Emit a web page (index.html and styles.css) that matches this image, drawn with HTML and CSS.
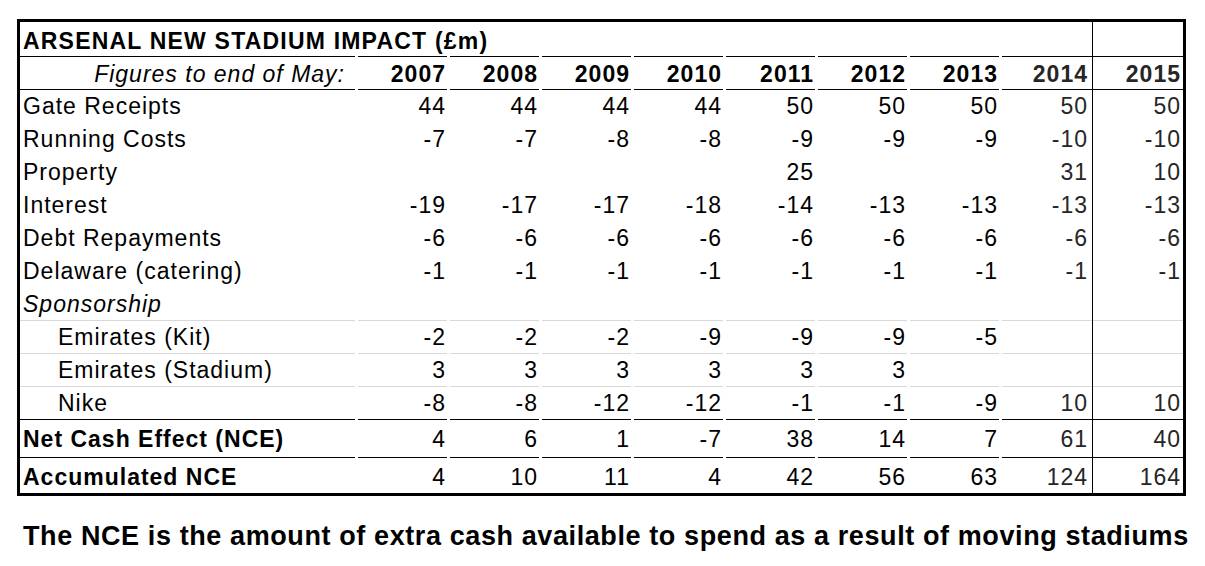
FILE: index.html
```html
<!DOCTYPE html>
<html>
<head>
<meta charset="utf-8">
<link rel="stylesheet" href="styles.css">
</head>
<body>
<table class="sheet">
  <colgroup>
    <col class="w-label"><col class="w-yr"><col class="w-yr"><col class="w-yr"><col class="w-yr"><col class="w-yr"><col class="w-yr"><col class="w-yr"><col class="w-14"><col class="w-15">
  </colgroup>
  <tr class="r-title ln-k">
    <td class="title">ARSENAL NEW STADIUM IMPACT (£m)</td><td></td><td></td><td></td><td></td><td></td><td></td><td></td><td class="c14"></td><td class="c15"></td>
  </tr>
  <tr class="r-head ln-k">
    <td class="fig">Figures to end of May:</td><td class="n b">2007</td><td class="n b">2008</td><td class="n b">2009</td><td class="n b">2010</td><td class="n b">2011</td><td class="n b">2012</td><td class="n b">2013</td><td class="n b c14">2014</td><td class="n b c15">2015</td>
  </tr>
  <tr class="r">
    <td class="lab">Gate Receipts</td><td class="n">44</td><td class="n">44</td><td class="n">44</td><td class="n">44</td><td class="n">50</td><td class="n">50</td><td class="n">50</td><td class="n c14">50</td><td class="n c15">50</td>
  </tr>
  <tr class="r">
    <td class="lab">Running Costs</td><td class="n">-7</td><td class="n">-7</td><td class="n">-8</td><td class="n">-8</td><td class="n">-9</td><td class="n">-9</td><td class="n">-9</td><td class="n c14">-10</td><td class="n c15">-10</td>
  </tr>
  <tr class="r">
    <td class="lab">Property</td><td class="n"></td><td class="n"></td><td class="n"></td><td class="n"></td><td class="n">25</td><td class="n"></td><td class="n"></td><td class="n c14">31</td><td class="n c15">10</td>
  </tr>
  <tr class="r">
    <td class="lab">Interest</td><td class="n">-19</td><td class="n">-17</td><td class="n">-17</td><td class="n">-18</td><td class="n">-14</td><td class="n">-13</td><td class="n">-13</td><td class="n c14">-13</td><td class="n c15">-13</td>
  </tr>
  <tr class="r">
    <td class="lab">Debt Repayments</td><td class="n">-6</td><td class="n">-6</td><td class="n">-6</td><td class="n">-6</td><td class="n">-6</td><td class="n">-6</td><td class="n">-6</td><td class="n c14">-6</td><td class="n c15">-6</td>
  </tr>
  <tr class="r">
    <td class="lab">Delaware (catering)</td><td class="n">-1</td><td class="n">-1</td><td class="n">-1</td><td class="n">-1</td><td class="n">-1</td><td class="n">-1</td><td class="n">-1</td><td class="n c14">-1</td><td class="n c15">-1</td>
  </tr>
  <tr class="r ln-g">
    <td class="lab it">Sponsorship</td><td class="n"></td><td class="n"></td><td class="n"></td><td class="n"></td><td class="n"></td><td class="n"></td><td class="n"></td><td class="n c14"></td><td class="n c15"></td>
  </tr>
  <tr class="r ln-g">
    <td class="lab ind">Emirates (Kit)</td><td class="n">-2</td><td class="n">-2</td><td class="n">-2</td><td class="n">-9</td><td class="n">-9</td><td class="n">-9</td><td class="n">-5</td><td class="n c14"></td><td class="n c15"></td>
  </tr>
  <tr class="r ln-g">
    <td class="lab ind">Emirates (Stadium)</td><td class="n">3</td><td class="n">3</td><td class="n">3</td><td class="n">3</td><td class="n">3</td><td class="n">3</td><td class="n"></td><td class="n c14"></td><td class="n c15"></td>
  </tr>
  <tr class="r ln-k">
    <td class="lab ind">Nike</td><td class="n">-8</td><td class="n">-8</td><td class="n">-12</td><td class="n">-12</td><td class="n">-1</td><td class="n">-1</td><td class="n">-9</td><td class="n c14">10</td><td class="n c15">10</td>
  </tr>
  <tr class="r-nce ln-k">
    <td class="lab b">Net Cash Effect (NCE)</td><td class="n">4</td><td class="n">6</td><td class="n">1</td><td class="n">-7</td><td class="n">38</td><td class="n">14</td><td class="n">7</td><td class="n c14">61</td><td class="n c15">40</td>
  </tr>
  <tr class="r-acc">
    <td class="lab b">Accumulated NCE</td><td class="n">4</td><td class="n">10</td><td class="n">11</td><td class="n">4</td><td class="n">42</td><td class="n">56</td><td class="n">63</td><td class="n c14">124</td><td class="n c15">164</td>
  </tr>
</table>
<p class="caption">The NCE is the amount of extra cash available to spend as a result of moving stadiums</p>
</body>
</html>
```
FILE: styles.css
```css
html, body {
  margin: 0;
  padding: 0;
  background: #fff;
}

body {
  font-family: "Liberation Sans", Arial, sans-serif;
  color: #000;
}

.sheet {
  margin: 19px 0 0 17px;
  width: 1169px;
  table-layout: fixed;
  border-collapse: separate;
  border-spacing: 0;
  border: 3px solid #000;
  font-size: 23px;
  letter-spacing: 1px;
}

.w-label { width: 338px; }
.w-yr { width: 92px; }
.w-14 { width: 91px; }
.w-15 { width: 90px; }

.sheet td {
  --lc: transparent;
  padding: 0;
  vertical-align: top;
  line-height: 32px;
  white-space: nowrap;
  background-image: linear-gradient(var(--lc), var(--lc));
  background-repeat: no-repeat;
  background-position: left bottom;
  background-size: calc(100% - 3px) 1px;
}

.sheet td.c14 {
  border-right: 1px solid #000;
  background-size: 100% 1px;
  color: #262626;
}

.sheet td.c15 {
  background-size: 100% 1px;
  color: #262626;
}

.ln-k > td { --lc: #000; }
.ln-g > td { --lc: #d9d9d9; }

.r-title { height: 35px; }
.r-title td { line-height: 32px; padding-top: 3px; }
.r-head { height: 33px; }
.r-head td { line-height: 32px; padding-top: 1px; }
.r { height: 33px; }
.r-nce { height: 38px; }
.r-nce td { line-height: 33px; padding-top: 3px; }
.r-acc { height: 35px; }
.r-acc td { line-height: 32px; padding-top: 3px; }

.title {
  font-weight: bold;
  letter-spacing: 1.2px;
  padding-left: 3px !important;
  overflow: visible;
}

.fig {
  font-style: italic;
  text-align: right;
  padding-right: 13px !important;
}

.lab { padding-left: 3px !important; }
.ind { padding-left: 38px !important; }
.it { font-style: italic; }
.b { font-weight: bold; }

.n {
  text-align: right;
  padding-right: 4px !important;
}

.sheet td.n.c14 { padding-right: 4px !important; }
.sheet td.n.c15 { padding-right: 2px !important; }

.caption {
  margin: 25px 0 0 23px;
  font-size: 27px;
  line-height: 30px;
  font-weight: bold;
  letter-spacing: 0.6px;
  white-space: nowrap;
}
```
